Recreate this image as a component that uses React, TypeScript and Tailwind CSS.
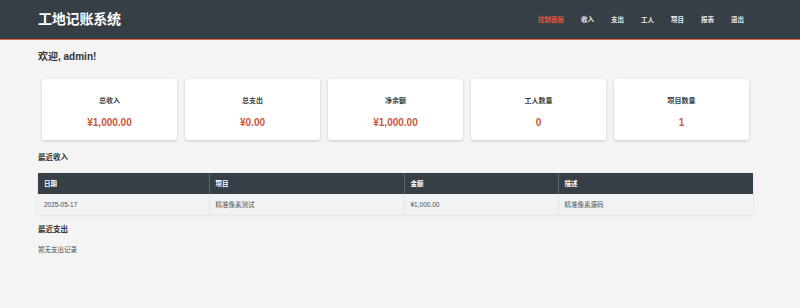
const stats = [
  { label: "总收入", value: "¥1,000.00" },
  { label: "总支出", value: "¥0.00" },
  { label: "净余额", value: "¥1,000.00" },
  { label: "工人数量", value: "0" },
  { label: "项目数量", value: "1" },
];

const nav = ["控制面板", "收入", "支出", "工人", "项目", "报表", "退出"];

export default function App() {
  return (
    <div className="min-h-[308px] bg-[#f4f4f5] font-['Liberation_Sans','Noto_Sans_CJK_SC',sans-serif]">
      {/* Header */}
      <header className="h-[40px] bg-[#363f45] border-b border-[#e0644f] flex items-center justify-between pl-[38px] pr-[56px]">
        <h1 className="text-[14px] font-bold text-white tracking-[-0.2px]">工地记账系统</h1>
        <nav className="flex items-center gap-[17px] text-[6.5px] font-bold">
          {nav.map((item, i) => (
            <span key={item} className={i === 0 ? "text-[#e5533c]" : "text-[#e8eaeb]"}>
              {item}
            </span>
          ))}
        </nav>
      </header>

      <main className="ml-[38px] w-[715px] pt-[11px]">
        <h2 className="text-[10px] font-bold text-[#2f3335] leading-[12px]">欢迎, admin!</h2>

        {/* Stat cards */}
        <div className="grid grid-cols-5 gap-[8px] px-[4px] mt-[16px]">
          {stats.map((s) => (
            <div key={s.label} className="h-[61px] bg-white rounded-[3px] shadow-[0_1px_3px_rgba(0,0,0,0.18)] flex flex-col items-center pt-[17px]">
              <div className="text-[7px] font-bold text-[#3a3f42] leading-[9px]">{s.label}</div>
              <div className="mt-[12px] text-[10px] font-bold text-[#c9553b] leading-[12px]">{s.value}</div>
            </div>
          ))}
        </div>

        <h3 className="mt-[13px] text-[7.5px] font-bold text-[#2f3335] leading-[10px]">最近收入</h3>

        {/* Income table */}
        <table className="mt-[10px] w-full border-collapse text-[6.5px] shadow-[0_1px_3px_rgba(0,0,0,0.08)]">
          <thead>
            <tr className="h-[21px] bg-[#363f45] text-white font-bold text-left">
              <th className="w-[171px] px-[6px] border-r border-[#5a6369]">日期</th>
              <th className="w-[195px] px-[6px] border-r border-[#5a6369]">项目</th>
              <th className="w-[154px] px-[6px] border-r border-[#5a6369]">金额</th>
              <th className="px-[6px]">描述</th>
            </tr>
          </thead>
          <tbody>
            <tr className="h-[21px] bg-[#f1f2f3] text-[#4a4f52]">
              <td className="px-[6px] border-r border-[#e2e4e5]">2025-05-17</td>
              <td className="px-[6px] border-r border-[#e2e4e5]">精准像素测试</td>
              <td className="px-[6px] border-r border-[#e2e4e5]">¥1,000.00</td>
              <td className="px-[6px]">精准像素源码</td>
            </tr>
          </tbody>
        </table>

        <h3 className="mt-[10px] text-[7.5px] font-bold text-[#2f3335] leading-[10px]">最近支出</h3>
        <p className="mt-[10px] text-[6.5px] text-[#4a4f52] leading-[9px]">暂无支出记录</p>
      </main>
    </div>
  );
}
